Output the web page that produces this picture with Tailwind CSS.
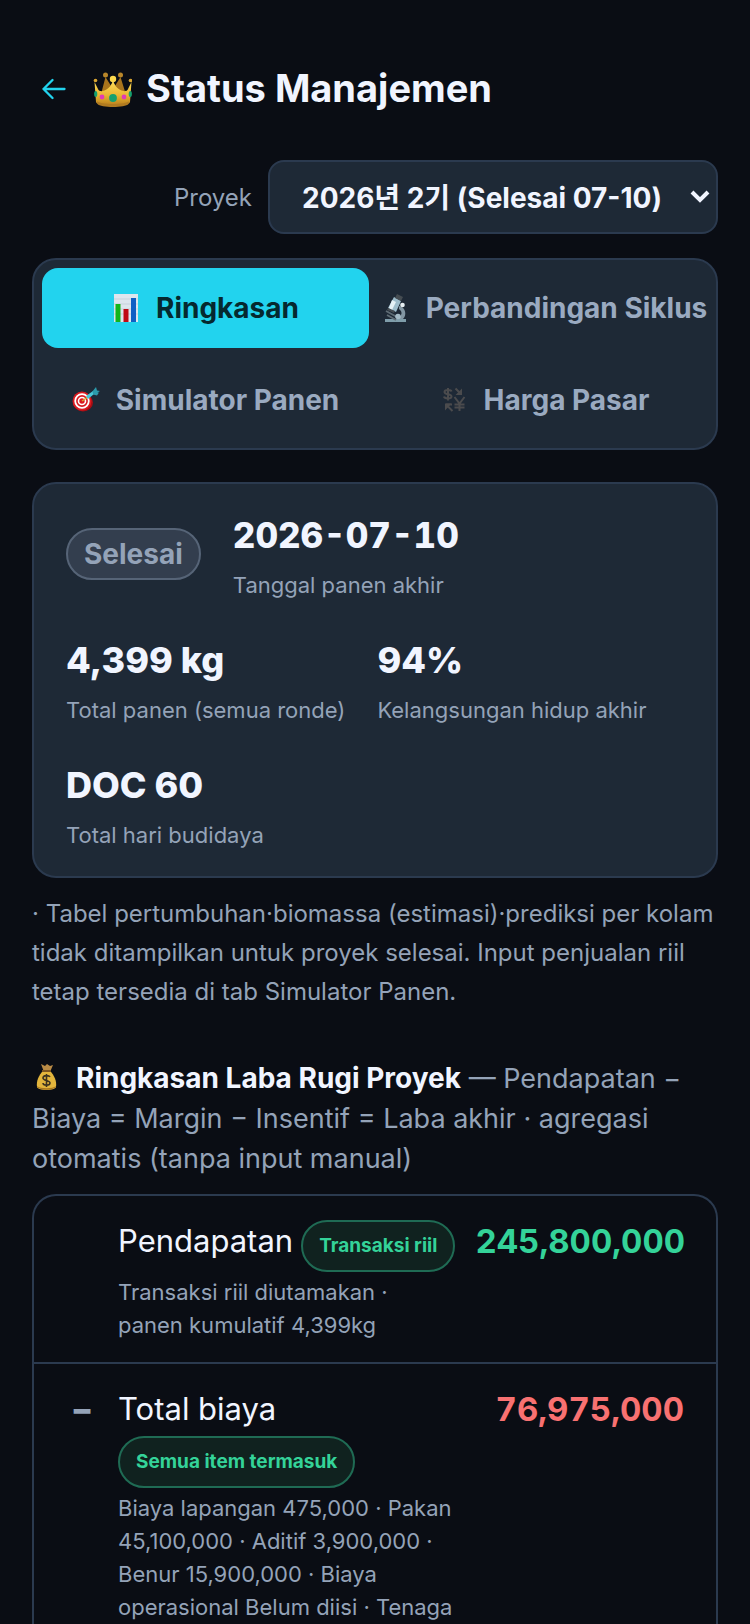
<!DOCTYPE html>
<html lang="id">
<head>
<meta charset="utf-8">
<meta name="viewport" content="width=device-width, initial-scale=1">
<title>Status Manajemen</title>
<script src="https://cdn.jsdelivr.net/npm/@tailwindcss/browser@4"></script>
</head>
<body class="bg-[#0a0d14] text-[#f1f5ff] font-['Inter','Noto_Sans_CJK_KR',sans-serif]">
<main class="min-h-screen flex flex-col px-8 pt-16">

  <header class="flex items-center h-12">
    <a href="#" aria-label="Kembali" class="flex items-center justify-center w-11 h-12 pt-0.5 text-[#22d3ee]">
      <svg class="w-6 h-6" viewBox="0 0 24 24" fill="none" stroke="currentColor" stroke-width="2.300" stroke-linecap="round" stroke-linejoin="round"><path d="M22.500 12H1.500M10.500 3L1.500 12l9 9"/></svg>
    </a>
    <h1 class="flex items-center gap-3.5 ml-4 text-[38px] leading-12 font-bold whitespace-nowrap">
      <svg class="w-10 h-10 shrink-0" viewBox="0 0 40 40" aria-hidden="true">
        <defs>
          <linearGradient id="gold" x1="0" y1="0" x2="0" y2="1"><stop offset="0" stop-color="#ffe05a"/><stop offset=".6" stop-color="#e8b431"/><stop offset="1" stop-color="#b97d1c"/></linearGradient>
        </defs>
        <g transform="translate(1 2)">
        <path d="M7 28L12.500 7l7.500 12 7.500-12L34 28z" fill="#a8741c"/>
        <path d="M1.500 12l4 8c2 2 5 1 7 0 4-2 6-5 7.500-10 1.500 5 3.500 8 7.500 10 2 1 5 2 7 0l4-8-1.500 20c-1 5-33 5-34 0z" fill="url(#gold)"/>
        <path d="M4 31c2 4 30 4 32 0l-.5 3c-3 4-28 4-31 0z" fill="#b07a20"/>
        <circle cx="12.500" cy="5" r="2.500" fill="#b8862a"/><circle cx="27.500" cy="5" r="2.500" fill="#b8862a"/><circle cx="20" cy="9" r="3.200" fill="#fcd84d"/>
        <circle cx="2.500" cy="10.500" r="1.800" fill="#d9a531"/><circle cx="37.500" cy="10.500" r="1.800" fill="#d9a531"/>
        <circle cx="20" cy="28" r="3.900" fill="#15a06f"/><circle cx="9" cy="27" r="2.400" fill="#e23bb5"/><circle cx="31" cy="27" r="2.400" fill="#e23bb5"/>
        <ellipse cx="2.700" cy="24" rx="1.600" ry="3" fill="#15a06f"/><ellipse cx="37.300" cy="24" rx="1.600" ry="3" fill="#15a06f"/>
        </g>
      </svg>
      Status Manajemen
    </h1>
  </header>

  <div class="flex items-center justify-end gap-4 mt-12">
    <label for="proyek" class="pt-0.5 text-2xl text-[#94a3b8]">Proyek</label>
    <div class="relative w-[450px]">
      <select id="proyek" class="appearance-none block w-full h-[74px] pt-0.5 pl-8 pr-12 rounded-2xl border-2 border-[#2b3a4f] bg-[#1e2936] text-[28px] font-bold text-[#f1f5ff]">
        <option>2026년 2기 (Selesai 07-10)</option>
      </select>
      <svg class="absolute right-2 top-7 w-5 h-5 pointer-events-none" viewBox="0 0 20 20" fill="none" stroke="#f1f5ff" stroke-width="4" aria-hidden="true"><path d="M2 4l8 8 8-8"/></svg>
    </div>
  </div>

  <nav class="grid grid-cols-2 gap-3 mt-6 p-2 rounded-3xl border-2 border-[#2b3a4f] bg-[#1e2936] text-[28px] font-bold text-[#9aaac0]" aria-label="Tab">
    <button type="button" class="flex items-center justify-center gap-4 h-20 min-w-0 whitespace-nowrap rounded-2xl bg-[#22d3ee] text-[#05292f]">
      <svg class="w-7 h-7 shrink-0" viewBox="0 0 28 28" aria-hidden="true"><path d="M2 0h24v28H2z" fill="#dde6ee"/><path d="M2 5h24M2 10h24M2 15h24M2 20h24" stroke="#c7d2dc"/><path d="M3.500 10h5v18h-5z" fill="#12b51b"/><path d="M11.500 15h5v13h-5z" fill="#c00a14"/><path d="M19 4h5v24h-5z" fill="#0f5fc4"/></svg>
      Ringkasan
    </button>
    <button type="button" class="flex items-center justify-center gap-4 h-20 min-w-0 whitespace-nowrap rounded-2xl">
      <svg class="w-7 h-7 shrink-0" viewBox="0 0 28 28" aria-hidden="true"><path d="M3 25h21v3H3z" fill="#7f9daa"/><path d="M17 12c7 1 8 10 4 13h-5c4-4 5-7 1-10z" fill="#8296a3"/><path d="M4 17l11 6M5 21l9 5" stroke="#5f6c75" stroke-width="1.800"/><path d="M12 3l7 4-5 11-8-4z" fill="#9dbccb"/><path d="M10 6l4 2-4 8-3-2z" fill="#e5f1f6"/><path d="M15 0l6 3-2 4-6-3z" fill="#454c52"/><path d="M6 14l7 3-1 2-7-3z" fill="#454c52"/><circle cx="20.500" cy="11" r="2.300" fill="#e6eef2"/><circle cx="16" cy="22.500" r="2.800" fill="#a4bac5"/></svg>
      Perbandingan Siklus
    </button>
    <button type="button" class="flex items-center justify-center gap-4 h-20 min-w-0 whitespace-nowrap rounded-2xl">
      <svg class="w-7 h-7 shrink-0" viewBox="0 0 28 28" aria-hidden="true"><ellipse cx="11" cy="16.500" rx="10" ry="9" fill="#a60d13"/><circle cx="10" cy="15" r="9.500" fill="#d9191f"/><circle cx="10" cy="15" r="6.800" fill="none" stroke="#fff" stroke-width="1.800"/><circle cx="10" cy="15" r="3.500" fill="none" stroke="#fff" stroke-width="1.600"/><path d="M10 15l6-4" stroke="#d8a830" stroke-width="1.500"/><path d="M14 10l7-5 1 3-6 5z" fill="#48c5d5"/><path d="M20 6l4-5 1 3.500 3 .5-5 3zM21 7l6-.5-2 3-4-1z" fill="#2c9bab"/></svg>
      Simulator Panen
    </button>
    <button type="button" class="flex items-center justify-center gap-4 h-20 min-w-0 whitespace-nowrap rounded-2xl">
      <svg class="w-7 h-7 shrink-0" viewBox="0 0 28 28" fill="none" stroke="#4b4b4d" stroke-width="2" aria-hidden="true"><path d="M11.500 5.500C11 3.500 4.500 3.500 4.500 6c0 3 7 1.500 7 4.500 0 2.500-7 2.500-7.500 0M8 2v12.500M15.500 2.500l5 5M6 18.500h6M7 19.500l5.500 5.500M14.500 11l5 6.500 5-6.500M19.500 17v8M14.500 18.500h10M14.500 21.500h10"/><path d="M22 2.500v6.500h-6.500zM5 17.500h6.500L5 24.500z" fill="#4b4b4d" stroke="none"/></svg>
      Harga Pasar
    </button>
  </nav>

  <section class="flex flex-wrap items-center gap-x-8 gap-y-[37px] mt-8 px-8 pt-[29px] pb-[25px] rounded-3xl border-2 border-[#2b3a4f] bg-[#1e2936]">
    <span class="flex items-center h-13 mb-1.5 px-4 rounded-full border-2 border-[#566477] bg-[#333e4e] text-[28px] font-bold text-[#94a3b8]">Selesai</span>
    <div class="mr-40"><p class="text-[35px] leading-11 font-extrabold tabular-nums">2026-07-10</p><p class="mt-3 text-[22px] leading-8 text-[#94a3b8]">Tanggal panen akhir</p></div>
    <div><p class="text-4xl leading-11 font-extrabold">4,399 kg</p><p class="mt-3 text-[22px] leading-8 text-[#94a3b8]">Total panen (semua ronde)</p></div>
    <div><p class="text-4xl leading-11 font-extrabold">94%</p><p class="mt-3 text-[22px] leading-8 text-[#94a3b8]">Kelangsungan hidup akhir</p></div>
    <div><p class="text-4xl leading-11 font-extrabold">DOC 60</p><p class="mt-3 text-[22px] leading-8 text-[#94a3b8]">Total hari budidaya</p></div>
  </section>

  <p class="mt-4 text-2xl leading-[39px] text-[#94a3b8]">· Tabel pertumbuhan·biomassa (estimasi)·prediksi per kolam<br>tidak ditampilkan untuk proyek selesai. Input penjualan riil<br>tetap tersedia di tab Simulator Panen.</p>

  <h2 class="mt-[47px] text-[27px] leading-10 font-normal text-[#94a3b8]"><svg class="inline-block align-[-3px] w-7 h-7 mr-4" viewBox="0 0 28 28" aria-hidden="true"><path d="M9 1l4 2 2-2 3 2 3-1-3 7h-6z" fill="#b98a45"/><path d="M11 8h7c4 4 7 10 6 16-1 4-18 4-19 0-1-6 2-12 6-16z" fill="#e3b53c"/><path d="M5 23c3 3 16 3 19 0-1 5-18 5-19 0z" fill="#a8761f"/><path d="M10 8h9" stroke="#7d5520" stroke-width="2"/><path d="M18 14c-1-2-7-2-7 1s7 2 7 5-7 3-7 0M14.500 11v13" fill="none" stroke="#3d3320" stroke-width="1.600"/></svg><strong class="text-[28px] font-bold text-[#f1f5ff]">Ringkasan Laba Rugi Proyek</strong> — Pendapatan −<br>Biaya = Margin − Insentif = Laba akhir · agregasi<br>otomatis (tanpa input manual)</h2>

  <section class="flex-1 mt-[15px] rounded-t-3xl border-2 border-b-0 border-[#2b3a4f]">
    <div class="grid grid-cols-[32px_1fr_auto] gap-x-5 px-8 pt-6 pb-5 border-b-2 border-[#2b3a4f]">
      <span></span>
      <div>
        <div class="flex items-start gap-x-2"><span class="text-[31px] leading-[42px]">Pendapatan</span><span class="flex items-center h-13 px-4 rounded-full border-2 border-[#1f6b54] bg-[#10221f] text-[19px] font-bold text-[#34d399] whitespace-nowrap">Transaksi riil</span></div>
        <p class="mt-1 text-[22px] leading-[33px] text-[#94a3b8]">Transaksi riil diutamakan ·<br>panen kumulatif 4,399kg</p>
      </div>
      <span class="text-[33px] leading-[42px] font-bold tabular-nums text-[#34d399]">245,800,000</span>
    </div>
    <div class="grid grid-cols-[32px_1fr_auto] gap-x-5 px-8 pt-6">
      <span class="text-[33px] leading-[42px] font-extrabold text-center text-[#94a3b8]">−</span>
      <div>
        <span class="block text-[31px] leading-[42px]">Total biaya</span>
        <span class="flex items-center w-fit h-13 mt-1.5 px-4 rounded-full border-2 border-[#1f6b54] bg-[#10221f] text-[19px] font-bold text-[#34d399] whitespace-nowrap">Semua item termasuk</span>
        <p class="mt-1 text-[22px] leading-[33px] text-[#94a3b8] whitespace-nowrap">Biaya lapangan 475,000 · Pakan<br>45,100,000 · Aditif 3,900,000 ·<br>Benur 15,900,000 · Biaya<br>operasional Belum diisi · Tenaga</p>
      </div>
      <span class="text-[33px] leading-[42px] font-bold tabular-nums text-[#f87171]">76,975,000</span>
    </div>
  </section>
</main>
</body>
</html>
